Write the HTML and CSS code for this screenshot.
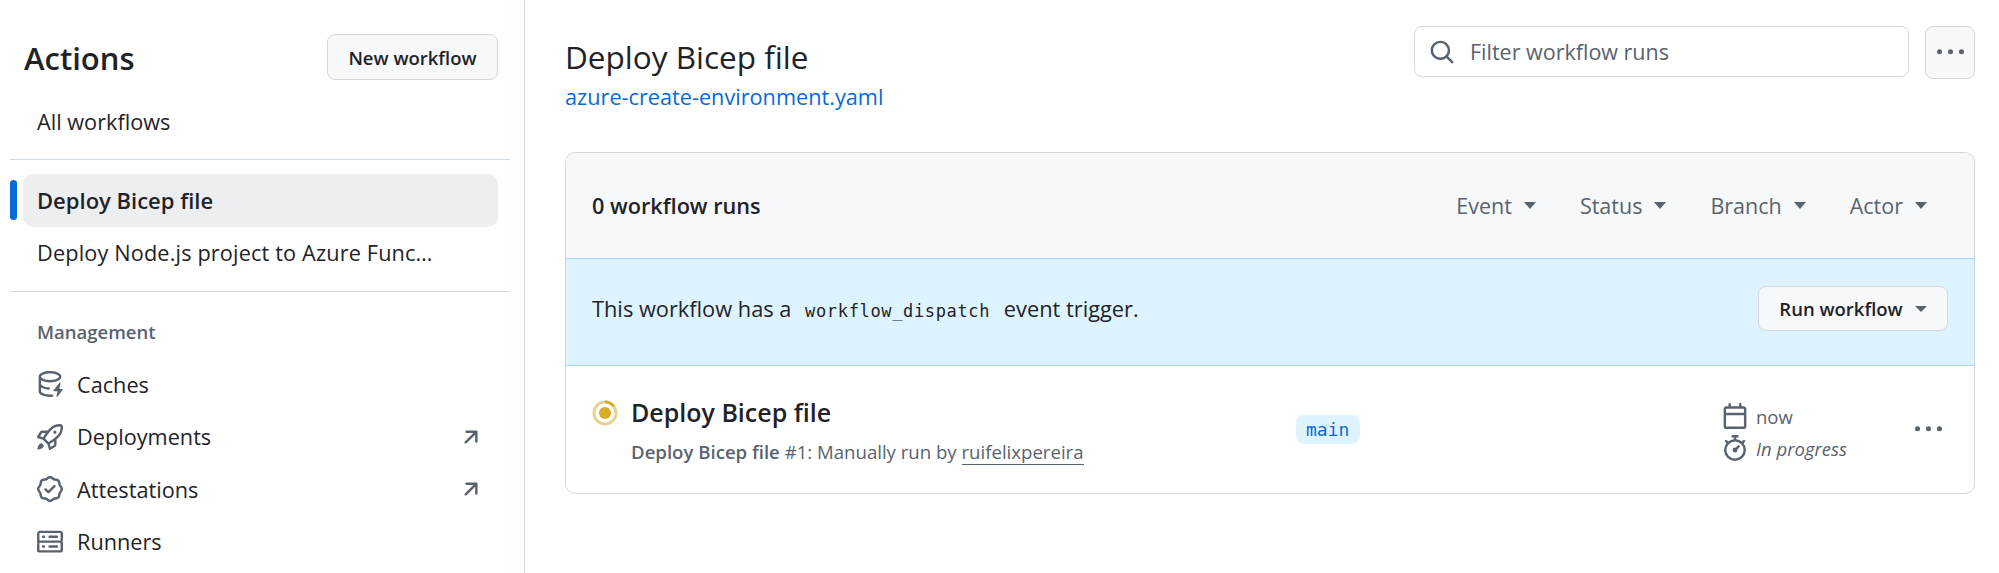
FILE: index.html
```html
<!DOCTYPE html>
<html lang="en">
<head>
<meta charset="utf-8">
<title>Deploy Bicep file</title>
<link rel="stylesheet" href="styles.css">
</head>
<body>
<div class="page">
  <aside class="sidebar">
    <div class="side-head">
      <h2 class="side-title">Actions</h2>
      <button class="btn btn-new">New workflow</button>
    </div>
    <div class="nav-item nav-first">All workflows</div>
    <div class="divider div-a"></div>
    <div class="active-wrap">
      <span class="active-bar"></span>
      <div class="nav-item nav-active">Deploy Bicep file</div>
    </div>
    <div class="nav-item nav-long">Deploy Node.js project to Azure Func…</div>
    <div class="divider div-b"></div>
    <div class="section-label">Management</div>
    <div class="nav-item nav-icon">
      <svg class="icon" viewBox="0 0 16 16"><path d="M2.5 5.724V8c0 .248.238.7 1.169 1.159.874.43 2.144.745 3.62.822a.75.75 0 1 1-.078 1.498c-1.622-.085-3.102-.432-4.204-.975a5.565 5.565 0 0 1-.507-.28V12.5c0 .133.058.318.282.551.227.237.591.483 1.101.707 1.015.447 2.47.742 4.117.742.406 0 .802-.018 1.183-.052a.751.751 0 1 1 .134 1.494C8.89 15.98 8.45 16 8 16c-1.805 0-3.475-.32-4.721-.869-.623-.274-1.173-.619-1.579-1.041-.408-.425-.7-.964-.7-1.59v-9c0-.626.292-1.165.7-1.591.406-.42.956-.766 1.579-1.04C4.525.32 6.195 0 8 0c1.806 0 3.476.32 4.721.869.623.274 1.173.619 1.579 1.041.408.425.7.964.7 1.59 0 .626-.292 1.165-.7 1.591-.406.42-.956.766-1.578 1.04C11.475 6.68 9.805 7 8 7c-1.805 0-3.475-.32-4.721-.869a6.15 6.15 0 0 1-.779-.407Zm0-2.224c0 .133.058.318.282.551.227.237.591.483 1.101.707C4.898 5.205 6.353 5.5 8 5.5c1.646 0 3.101-.295 4.118-.742.508-.224.873-.471 1.1-.708.224-.232.282-.417.282-.55 0-.133-.058-.318-.282-.551-.227-.237-.591-.483-1.101-.707C11.102 1.795 9.647 1.5 8 1.5c-1.646 0-3.101.295-4.118.742-.508.224-.873.471-1.1.708-.224.232-.282.417-.282.55Z"/><path d="M14.49 7.582a.375.375 0 0 0-.66-.313l-3.625 4.625a.375.375 0 0 0 .295.606h2.127l-.619 2.922a.375.375 0 0 0 .666.304l3.125-4.125a.375.375 0 0 0-.299-.601h-1.778l.768-3.418Z"/></svg>
      <span class="nav-label">Caches</span>
    </div>
    <div class="nav-item nav-icon">
      <svg class="icon" viewBox="0 0 16 16"><path d="M14.064 0h.186C15.216 0 16 .784 16 1.75v.186a8.752 8.752 0 0 1-2.564 6.186l-.458.459c-.314.314-.641.616-.979.904v3.207c0 .608-.315 1.172-.833 1.49l-2.774 1.707a.749.749 0 0 1-1.11-.418l-.954-3.102a1.214 1.214 0 0 1-.145-.125L3.754 9.816a1.218 1.218 0 0 1-.124-.145L.528 8.717a.749.749 0 0 1-.418-1.11l1.71-2.774A1.749 1.749 0 0 1 3.31 4h3.204c.288-.338.59-.665.904-.979l.459-.458A8.749 8.749 0 0 1 14.064 0ZM8.938 3.623h-.002l-.458.458c-.76.76-1.437 1.598-2.02 2.5l-1.5 2.317 2.143 2.143 2.317-1.5c.902-.583 1.74-1.26 2.499-2.02l.459-.458a7.25 7.25 0 0 0 2.123-5.127V1.75a.25.25 0 0 0-.25-.25h-.186a7.249 7.249 0 0 0-5.125 2.123ZM3.56 14.56c-.732.732-2.334 1.045-3.005 1.148a.234.234 0 0 1-.201-.064.234.234 0 0 1-.064-.201c.103-.671.416-2.273 1.15-3.003a1.501 1.501 0 1 1 2.12 2.12Zm6.94-3.935c-.088.06-.177.118-.266.175l-2.35 1.521.548 1.783 1.949-1.2a.25.25 0 0 0 .119-.213ZM3.678 8.116 5.2 5.766c.058-.09.117-.178.176-.266H3.309a.25.25 0 0 0-.213.119l-1.2 1.95ZM12 5a1 1 0 1 1-2 0 1 1 0 0 1 2 0Z"/></svg>
      <span class="nav-label">Deployments</span>
      <svg class="icon arrow" viewBox="0 0 16 16"><path d="M4.53 4.75A.75.75 0 0 1 5.28 4h6.01a.75.75 0 0 1 .75.75v6.01a.75.75 0 0 1-1.5 0v-4.2l-5.26 5.261a.749.749 0 0 1-1.275-.326.749.749 0 0 1 .215-.734L9.48 5.5h-4.2a.75.75 0 0 1-.75-.75Z"/></svg>
    </div>
    <div class="nav-item nav-icon">
      <svg class="icon" viewBox="0 0 16 16"><path d="M9.585.52l.929.68c.153.112.331.186.518.215l1.138.175a2.678 2.678 0 0 1 2.24 2.24l.174 1.139c.029.187.103.365.215.518l.68.928a2.677 2.677 0 0 1 0 3.17l-.68.928a1.174 1.174 0 0 0-.215.518l-.175 1.138a2.678 2.678 0 0 1-2.241 2.241l-1.138.175a1.17 1.17 0 0 0-.518.215l-.928.68a2.677 2.677 0 0 1-3.17 0l-.928-.68a1.174 1.174 0 0 0-.518-.215L3.83 14.41a2.678 2.678 0 0 1-2.24-2.24l-.175-1.138a1.17 1.17 0 0 0-.215-.518l-.68-.928a2.677 2.677 0 0 1 0-3.17l.68-.928c.112-.153.186-.331.215-.518l.175-1.14a2.678 2.678 0 0 1 2.24-2.24l1.139-.175c.187-.029.365-.103.518-.215l.928-.68a2.677 2.677 0 0 1 3.17 0ZM7.303 1.728l-.927.68a2.67 2.67 0 0 1-1.18.489l-1.137.174a1.179 1.179 0 0 0-.987.987l-.174 1.136a2.677 2.677 0 0 1-.489 1.18l-.68.928a1.18 1.18 0 0 0 0 1.394l.68.927c.256.348.424.753.489 1.18l.174 1.137c.078.509.478.909.987.987l1.136.174a2.67 2.67 0 0 1 1.18.489l.928.68c.414.305.979.305 1.394 0l.927-.68a2.67 2.67 0 0 1 1.18-.489l1.137-.174a1.18 1.18 0 0 0 .987-.987l.174-1.136a2.67 2.67 0 0 1 .489-1.18l.68-.928a1.176 1.176 0 0 0 0-1.394l-.68-.927a2.686 2.686 0 0 1-.489-1.18l-.174-1.137a1.179 1.179 0 0 0-.987-.987l-1.136-.174a2.677 2.677 0 0 1-1.18-.489l-.928-.68a1.176 1.176 0 0 0-1.394 0ZM11.28 6.78l-3.75 3.75a.75.75 0 0 1-1.06 0L4.72 8.78a.751.751 0 0 1 .018-1.042.751.751 0 0 1 1.042-.018L7 8.94l3.22-3.22a.751.751 0 0 1 1.042.018.751.751 0 0 1 .018 1.042Z"/></svg>
      <span class="nav-label">Attestations</span>
      <svg class="icon arrow" viewBox="0 0 16 16"><path d="M4.53 4.75A.75.75 0 0 1 5.28 4h6.01a.75.75 0 0 1 .75.75v6.01a.75.75 0 0 1-1.5 0v-4.2l-5.26 5.261a.749.749 0 0 1-1.275-.326.749.749 0 0 1 .215-.734L9.48 5.5h-4.2a.75.75 0 0 1-.75-.75Z"/></svg>
    </div>
    <div class="nav-item nav-icon">
      <svg class="icon" viewBox="0 0 16 16"><path d="M1.75 1h12.5c.966 0 1.75.784 1.75 1.75v4c0 .372-.116.717-.314 1 .198.283.314.628.314 1v4a1.75 1.75 0 0 1-1.75 1.75H1.75A1.75 1.75 0 0 1 0 13.75v-4c0-.372.116-.717.314-1a1.739 1.739 0 0 1-.314-1v-4C0 1.784.784 1 1.75 1ZM1.5 2.75v4c0 .138.112.25.25.25h12.5a.25.25 0 0 0 .25-.25v-4a.25.25 0 0 0-.25-.25H1.75a.25.25 0 0 0-.25.25Zm.25 5.75a.25.25 0 0 0-.25.25v4c0 .138.112.25.25.25h12.5a.25.25 0 0 0 .25-.25v-4a.25.25 0 0 0-.25-.25ZM7 4.75A.75.75 0 0 1 7.75 4h4.5a.75.75 0 0 1 0 1.5h-4.5A.75.75 0 0 1 7 4.75ZM7.75 10h4.5a.75.75 0 0 1 0 1.5h-4.5a.75.75 0 0 1 0-1.5ZM3 4.75A.75.75 0 0 1 3.75 4h.5a.75.75 0 0 1 0 1.5h-.5A.75.75 0 0 1 3 4.75ZM3.75 10h.5a.75.75 0 0 1 0 1.5h-.5a.75.75 0 0 1 0-1.5Z"/></svg>
      <span class="nav-label">Runners</span>
    </div>
  </aside>
  <main class="main">
    <header class="main-head">
      <div class="title-block">
        <h1 class="title">Deploy Bicep file</h1>
        <a class="file-link">azure-create-environment.yaml</a>
      </div>
      <div class="tools">
        <div class="filter">
          <svg class="icon" viewBox="0 0 16 16"><path d="M10.68 11.74a6 6 0 0 1-7.922-8.982 6 6 0 0 1 8.982 7.922l3.04 3.04a.749.749 0 0 1-.326 1.275.749.749 0 0 1-.734-.215ZM11.5 7a4.499 4.499 0 1 0-8.997 0A4.499 4.499 0 0 0 11.5 7Z"/></svg>
          <span>Filter workflow runs</span>
        </div>
        <button class="btn btn-kebab"><svg class="icon icon-kebab" viewBox="0 0 16 16"><path d="M8 9a1.5 1.5 0 1 0 0-3 1.5 1.5 0 0 0 0 3ZM1.5 9a1.5 1.5 0 1 0 0-3 1.5 1.5 0 0 0 0 3Zm13 0a1.5 1.5 0 1 0 0-3 1.5 1.5 0 0 0 0 3Z"/></svg></button>
      </div>
    </header>
    <section class="box">
      <div class="box-head">
        <strong class="count">0 workflow runs</strong>
        <div class="filters">
          <span class="filter-item">Event<i class="caret"></i></span>
          <span class="filter-item">Status<i class="caret"></i></span>
          <span class="filter-item">Branch<i class="caret"></i></span>
          <span class="filter-item">Actor<i class="caret"></i></span>
        </div>
      </div>
      <div class="banner">
        <div class="banner-text">This workflow has a <code class="code">workflow_dispatch</code> event trigger.</div>
        <button class="btn btn-run">Run workflow<i class="caret caret-dark"></i></button>
      </div>
      <div class="run">
        <svg class="status" viewBox="0 0 24 24"><circle cx="12" cy="12" r="10.2" fill="none" stroke="#e8cf8e" stroke-width="2.6"/><path d="M12 1.8a10.2 10.2 0 0 1 8 4" fill="none" stroke="#dbab26" stroke-width="2.6"/><circle cx="12" cy="12" r="5.6" fill="#dbab26"/></svg>
        <div class="run-main">
          <div class="run-title">Deploy Bicep file</div>
          <div class="run-sub"><b class="run-sub-b">Deploy Bicep file</b> #1: Manually run by <span class="actor">ruifelixpereira</span></div>
        </div>
        <span class="branch">main</span>
        <div class="meta">
          <div class="meta-row">
            <svg class="icon" viewBox="0 0 16 16"><path d="M4.75 0a.75.75 0 0 1 .75.75V2h5V.75a.75.75 0 0 1 1.5 0V2h1.25c.966 0 1.75.784 1.75 1.75v10.5A1.75 1.75 0 0 1 13.25 16H2.75A1.75 1.75 0 0 1 1 14.25V3.75C1 2.784 1.784 2 2.75 2H4V.75A.75.75 0 0 1 4.75 0ZM2.5 7.5v6.75c0 .138.112.25.25.25h10.5a.25.25 0 0 0 .25-.25V7.5Zm10.75-4H2.75a.25.25 0 0 0-.25.25V6h11V3.75a.25.25 0 0 0-.25-.25Z"/></svg>
            <span>now</span>
          </div>
          <div class="meta-row">
            <svg class="icon" viewBox="0 0 16 16"><path d="M5.75.75A.75.75 0 0 1 6.5 0h3a.75.75 0 0 1 0 1.5h-.75v1l-.001.041a6.724 6.724 0 0 1 3.464 1.435l.007-.006.75-.75a.75.75 0 1 1 1.06 1.06l-.75.75-.006.007a6.75 6.75 0 1 1-10.548 0L2.72 5.03l-.75-.75a.751.751 0 0 1 .018-1.042.751.751 0 0 1 1.042-.018l.75.75.007.006A6.72 6.72 0 0 1 7.25 2.541V1.5H6.5a.75.75 0 0 1-.75-.75ZM8 14.5a5.25 5.25 0 1 0-.001-10.501A5.25 5.25 0 0 0 8 14.5Zm.389-6.7 1.33-1.33a.75.75 0 1 1 1.061 1.06L9.45 8.861A1.503 1.503 0 0 1 8 10.75a1.499 1.499 0 1 1 .389-2.95Z"/></svg>
            <em>In progress</em>
          </div>
        </div>
        <svg class="icon icon-kebab run-kebab" viewBox="0 0 16 16"><path d="M8 9a1.5 1.5 0 1 0 0-3 1.5 1.5 0 0 0 0 3ZM1.5 9a1.5 1.5 0 1 0 0-3 1.5 1.5 0 0 0 0 3Zm13 0a1.5 1.5 0 1 0 0-3 1.5 1.5 0 0 0 0 3Z"/></svg>
      </div>
    </section>
  </main>
</div>
</body>
</html>
```
FILE: styles.css
```css
* { box-sizing: border-box; }
html, body { margin: 0; padding: 0; height: 100%; overflow: hidden; background: #fff; }
body { font-family: "Open Sans", "Noto Sans", sans-serif; font-size: 21.7px; color: #1f2328; }
.page { display: flex; height: 573px; }
.icon { width: 26px; height: 26px; fill: #59636e; flex: none; display: block; }
.icon-kebab { width: 27px; height: 27px; }

.sidebar { width: 525px; flex: none; border-right: 1px solid #d1d9e0; padding: 34px 14px 0 10px; }
.side-head { display: flex; justify-content: space-between; align-items: center; padding: 0 12px 0 14px; height: 46px; }
.side-title { margin: 3px 0 0; font-size: 31px; line-height: 45px; font-weight: 600; }
.btn { font-family: inherit; border: 1px solid #d1d9e0; background: #f6f8fa; border-radius: 8px; color: #1f2328; padding: 0; }
.btn-new { width: 171px; height: 46px; font-size: 18.5px; font-weight: 600; }

.nav-item { height: 52.5px; display: flex; align-items: center; padding-left: 27px; white-space: nowrap; }
.nav-first { height: 40px; margin-top: 21px; }
.nav-long { letter-spacing: .15px; }
.divider { height: 1px; background: #d1d9e0; }
.div-a { margin: 18px 0 14px; width: 500px; }
.div-b { margin: 12px 0 0; width: 500px; }
.active-wrap { display: flex; align-items: center; gap: 6px; }
.active-bar { width: 7px; height: 40px; border-radius: 4px; background: #0969da; }
.nav-active { flex: none; width: 475px; background: #eceef0; border-radius: 10px; padding-left: 14px; font-size: 22px; font-weight: 600; }
.section-label { font-size: 18.5px; font-weight: 600; color: #59636e; padding: 29px 0 0 27px; line-height: 22px; height: 66px; }
.nav-icon { gap: 14px; }
.nav-label { flex: 1; }
.arrow { margin-right: 26px; }

.main { flex: 1; min-width: 0; padding: 26px 24px 0 40px; }
.main-head { display: flex; justify-content: space-between; height: 126px; }
.title { margin: 12px 0 0; font-size: 31.5px; line-height: 38px; font-weight: 400; }
.file-link { display: block; margin-top: 7px; color: #0969da; font-size: 21.7px; line-height: 28px; }
.tools { display: flex; gap: 16px; align-items: flex-start; }
.filter { width: 495px; height: 51px; border: 1px solid #d1d9e0; border-radius: 8px; display: flex; align-items: center; gap: 15px; padding-left: 14px; color: #59636e; font-size: 21.5px; }
.btn-kebab { width: 50px; height: 53px; display: flex; align-items: center; justify-content: center; }

.box { border: 1px solid #d1d9e0; border-radius: 10px; overflow: hidden; height: 342px; }
.box-head { height: 105px; background: #f6f8fa; display: flex; align-items: center; justify-content: space-between; padding: 0 47px 0 26px; }
.count { font-weight: 600; }
.filters { display: flex; gap: 44px; color: #59636e; font-size: 21.5px; }
.filter-item { display: flex; align-items: center; gap: 12px; }
.caret { display: inline-block; width: 0; height: 0; border-left: 6.5px solid transparent; border-right: 6.5px solid transparent; border-top: 7px solid #59636e; }
.caret-dark { margin-left: 12px; border-left-width: 6px; border-right-width: 6px; border-top-width: 6px; }
.banner { height: 108px; background: #ddf4ff; border-top: 1px solid #a5d6ff; border-bottom: 1px solid #a5d6ff; display: flex; align-items: center; justify-content: space-between; padding: 0 26px 7px; }
.banner-text { font-size: 21.8px; }
.code { font-family: "DejaVu Sans Mono", monospace; font-size: 17px; letter-spacing: .65px; padding: 0 8px; }
.btn-run { height: 45px; width: 190px; font-size: 18.5px; font-weight: 600; display: flex; align-items: center; justify-content: center; }
.run { height: 128px; display: flex; align-items: flex-start; padding: 31px 24px 0 26px; position: relative; }
.status { width: 26px; height: 26px; flex: none; margin-right: 13px; margin-top: 3px; }
.run-main { width: 665px; flex: none; }
.run-title { font-size: 25px; font-weight: 600; line-height: 30px; }
.run-sub { font-size: 18.6px; color: #59636e; margin-top: 13px; line-height: 24px; }
.run-sub-b { font-weight: 600; }
.actor { border-bottom: 1px solid #59636e; }
.branch { font-family: "DejaVu Sans Mono", monospace; font-size: 18px; color: #0969da; background: #ddf4ff; border-radius: 8px; padding: 0 10px; height: 29px; line-height: 29px; margin-top: 18px; width: 64px; flex: none; }
.meta { margin-left: auto; width: 160px; margin-right: 68px; font-size: 18.5px; color: #59636e; padding-top: 3px; }
.meta-row { display: flex; align-items: center; gap: 8px; height: 32px; }
.run-kebab { position: absolute; right: 32px; top: 50px; }
```
